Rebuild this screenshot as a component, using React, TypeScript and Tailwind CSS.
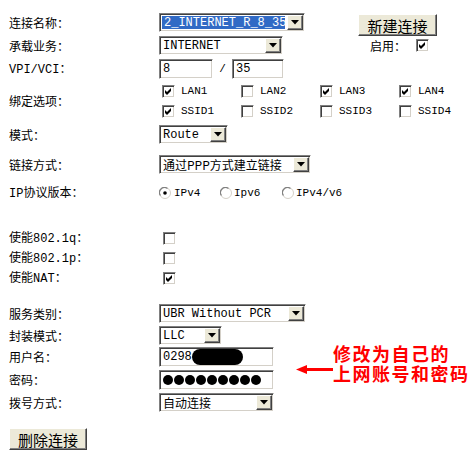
import React from "react";

const cjk = "font-['Noto_Sans_CJK_SC',sans-serif]";
const mono = "font-['Liberation_Mono','Noto_Sans_CJK_SC',monospace]";

// classic windows sunken edge
const sunken =
  "border border-t-[#808080] border-l-[#808080] border-b-[#ffffff] border-r-[#ffffff] shadow-[inset_1px_1px_0_#404040,inset_-1px_-1px_0_#d4d0c8]";
const raised =
  "border border-t-[#ffffff] border-l-[#ffffff] border-b-[#404040] border-r-[#404040] shadow-[inset_-1px_-1px_0_#808080,inset_1px_1px_0_#ece9d8]";

function Arrow() {
  return (
    <svg width="8" height="5" viewBox="0 0 8 5">
      <polygon points="0,0 8,0 4,4.5" fill="#000" />
    </svg>
  );
}

function Select({
  className,
  children,
  hl,
}: {
  className: string;
  children: React.ReactNode;
  hl?: boolean;
}) {
  return (
    <div className={`flex h-[19px] bg-white p-[1px] ${sunken} ${className}`}>
      <div
        className={`flex flex-1 items-center overflow-x-hidden whitespace-nowrap pl-[2px] text-[12px] leading-none ${mono} ${
          hl ? "my-[1px] ml-[1px] mr-[2px] bg-[#316ac5] text-white" : "text-black"
        }`}
      >
        {children}
      </div>
      <div
        className={`flex w-[16px] shrink-0 items-center justify-center bg-[#ece9d8] ${raised}`}
      >
        <Arrow />
      </div>
    </div>
  );
}

function Input({ className, children }: { className: string; children?: React.ReactNode }) {
  return (
    <div
      className={`flex h-[20px] items-center overflow-hidden whitespace-nowrap bg-white pl-[3px] text-[12px] ${mono} ${sunken} ${className}`}
    >
      {children}
    </div>
  );
}

function Check({ on }: { on?: boolean }) {
  return (
    <div className={`flex h-[13px] w-[13px] shrink-0 items-center justify-center bg-white ${sunken}`}>
      {on && (
        <svg width="7" height="7" viewBox="0 0 7 7">
          <polygon points="0,2 2,4 6,0 6,3 2,7 0,5" fill="#000" />
        </svg>
      )}
    </div>
  );
}

function Radio({ on }: { on?: boolean }) {
  return (
    <svg width="12" height="12" viewBox="0 0 12 12" className="shrink-0">
      <circle cx="6" cy="6" r="5.5" fill="#fff" stroke="#d4d0c8" />
      <path d="M1.5 8.5 A5 5 0 0 1 8.5 1.5" fill="none" stroke="#808080" strokeWidth="1.2" />
      {on && <circle cx="6" cy="6" r="1.8" fill="#000" />}
    </svg>
  );
}

function Label({ children }: { children: React.ReactNode }) {
  return (
    <div className={`w-[150px] shrink-0 text-[12px] leading-none text-black ${cjk}`}>{children}</div>
  );
}

const L = ({ children }: { children: React.ReactNode }) => (
  <span className={`text-[12px] ${mono}`}>{children}</span>
);

function Opt({ on, label }: { on?: boolean; label: string }) {
  return (
    <div className="flex w-[79px] items-center">
      <div className="ml-[3px] flex w-[19px]">
        <Check on={on} />
      </div>
      <span className={`text-[11px] leading-none text-black ${mono}`}>{label}</span>
    </div>
  );
}

function Btn({ className, children }: { className: string; children: React.ReactNode }) {
  return (
    <div
      className={`flex h-[22px] items-center justify-center bg-[#ece9d8] text-[15px] leading-none text-black ${cjk} ${raised} ${className}`}
    >
      {children}
    </div>
  );
}

export default function App() {
  return (
    <main className="relative h-[457px] w-[472px] overflow-hidden bg-white pl-[9px]">
      {/* top two rows + new connection button */}
      <div className="flex pt-[13px]">
        <div className="flex flex-col gap-[4px]">
          <div className="flex h-[19px] items-center">
            <Label>连接名称：</Label>
            <Select className="w-[146px]" hl>
              2_INTERNET_R_8_35
            </Select>
          </div>
          <div className="flex h-[19px] items-center">
            <Label>承载业务：</Label>
            <Select className="w-[124px]">INTERNET</Select>
          </div>
        </div>
        <div className="ml-[53px] flex flex-col items-start pt-[1px]">
          <Btn className="w-[79px]">新建连接</Btn>
          <div className="mt-[3px] flex items-center">
            <span className={`ml-[12px] w-[46px] text-[12px] leading-none ${cjk}`}>启用：</span>
            <Check on />
          </div>
        </div>
      </div>

      <div className="mt-[4px] flex h-[20px] items-center">
        <Label>
          <L>VPI/VCI</L>：
        </Label>
        <Input className="w-[54px]">8</Input>
        <span className={`w-[19px] text-center text-[11px] ${mono}`}>/</span>
        <Input className="w-[52px]">35</Input>
      </div>

      <div className="mt-[2px] flex items-center">
        <Label>绑定选项：</Label>
        <div className="flex flex-col">
          <div className="flex h-[20px] items-center">
            <Opt on label="LAN1" />
            <Opt label="LAN2" />
            <Opt on label="LAN3" />
            <Opt on label="LAN4" />
          </div>
          <div className="flex h-[20px] items-center">
            <Opt on label="SSID1" />
            <Opt label="SSID2" />
            <Opt label="SSID3" />
            <Opt label="SSID4" />
          </div>
        </div>
      </div>

      <div className="mt-[4px] flex h-[19px] items-center">
        <Label>模式：</Label>
        <Select className="w-[69px]">Route</Select>
      </div>

      <div className="mt-[11px] flex h-[19px] items-center">
        <Label>链接方式：</Label>
        <Select className="w-[152px]">
          <span className={`text-[12px] leading-[14px] ${cjk}`}>通过PPP方式建立链接</span>
        </Select>
      </div>

      <div className="mt-[10px] flex h-[18px] items-center">
        <Label>
          <L>IP</L>协议版本：
        </Label>
        <div className="flex items-center">
          <div className="flex w-[61px] items-center">
            <Radio on />
            <span className={`ml-[3px] text-[11px] ${mono}`}>IPv4</span>
          </div>
          <div className="flex w-[62px] items-center">
            <Radio />
            <span className={`ml-[2px] text-[11px] ${mono}`}>Ipv6</span>
          </div>
          <div className="flex items-center">
            <Radio />
            <span className={`ml-[2px] text-[11px] ${mono}`}>IPv4/v6</span>
          </div>
        </div>
      </div>

      <div className="mt-[27px] flex h-[18px] items-center">
        <Label>
          使能<L>802.1q</L>：
        </Label>
        <div className="ml-[4px]">
          <Check />
        </div>
      </div>
      <div className="mt-[2px] flex h-[18px] items-center">
        <Label>
          使能<L>802.1p</L>：
        </Label>
        <div className="ml-[4px]">
          <Check />
        </div>
      </div>
      <div className="mt-[2px] flex h-[18px] items-center">
        <Label>
          使能<L>NAT</L>：
        </Label>
        <div className="ml-[4px]">
          <Check on />
        </div>
      </div>

      <div className="mt-[17px] flex h-[19px] items-center">
        <Label>服务类别：</Label>
        <Select className="w-[147px]">UBR Without PCR</Select>
      </div>
      <div className="mt-[3px] flex h-[19px] items-center">
        <Label>封装模式：</Label>
        <Select className="w-[63px]">LLC</Select>
      </div>
      <div className="mt-[2px] flex h-[20px] items-center">
        <Label>用户名：</Label>
        <Input className="w-[115px]">
          <span className="text-[12px]">0298</span>
          <span className="h-[16px] w-[51px] rounded-full bg-black" />
        </Input>
      </div>
      <div className="mt-[3px] flex h-[20px] items-center">
        <Label>密码：</Label>
        <Input className="w-[115px]">
          <div className="flex gap-[1px]">
            {[0, 1, 2, 3, 4, 5, 6, 7, 8].map((i) => (
              <span key={i} className="h-[10px] w-[10px] rounded-full bg-black" />
            ))}
          </div>
        </Input>
      </div>
      <div className="mt-[3px] flex h-[19px] items-center">
        <Label>拨号方式：</Label>
        <Select className="w-[115px]">
          <span className={`text-[12px] leading-[14px] ${cjk}`}>自动连接</span>
        </Select>
      </div>

      <Btn className="mt-[16px] w-[78px]">删除连接</Btn>

      {/* red annotation */}
      <svg
        width="37"
        height="11"
        viewBox="0 0 37 11"
        className="absolute left-[296px] top-[364px]"
      >
        <polygon points="0,5.5 11,1 11,10" fill="#ff0000" />
        <rect x="10" y="4" width="27" height="3" fill="#ff0000" />
      </svg>
      <div
        className={`absolute left-[333px] top-[343px] text-[18px] font-bold leading-[20px] tracking-[1.5px] text-[#ff0000] ${cjk}`}
      >
        <div>修改为自己的</div>
        <div>上网账号和密码</div>
      </div>
    </main>
  );
}
